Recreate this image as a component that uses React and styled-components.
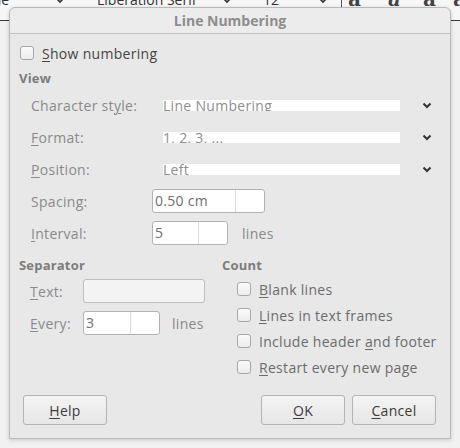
import React from "react";
import styled, { createGlobalStyle } from "styled-components";

const GlobalStyle = createGlobalStyle`
	html, body {
		margin: 0;
		padding: 0;
	}
	body {
		width: 460px;
		height: 448px;
		overflow: hidden;
		background: #f1f1f1;
		font-family: "Open Sans", "DejaVu Sans", sans-serif;
	}
`;

const Screen = styled.div`
	position: relative;
	width: 460px;
	height: 448px;
	overflow: hidden;
`;

const Toolbar = styled.div`
	display: flex;
	align-items: flex-start;
	height: 20px;
	background: #f7f7f7;
	border-bottom: 1px solid #3a3a3a;
	overflow: hidden;
`;

const ToolText = styled.span`
	flex: none;
	width: ${(p) => p.$w}px;
	margin-left: ${(p) => p.$ml || 0}px;
	margin-top: -9px;
	font-size: 14px;
	line-height: 18px;
	color: #333;
	white-space: nowrap;
`;

const ToolChevron = styled.svg`
	flex: none;
	margin-top: -3px;
`;

const ToolSep = styled.span`
	flex: none;
	width: 1px;
	height: 20px;
	background: #555;
	margin-left: 13px;
`;

const Glyph = styled.span`
	flex: none;
	width: ${(p) => p.$w}px;
	margin-left: ${(p) => p.$ml || 0}px;
	margin-top: -12px;
	font-family: "DejaVu Serif", serif;
	font-weight: bold;
	font-style: ${(p) => (p.$italic ? "italic" : "normal")};
	font-size: 20px;
	line-height: 22px;
	color: #444;
`;

const Dialog = styled.div`
	position: absolute;
	left: 9px;
	top: 7px;
	width: 442px;
	height: 432px;
	box-sizing: border-box;
	display: flex;
	flex-direction: column;
	background: #e8e8e8;
	border: 1px solid #b9b9b9;
	border-radius: 6px 6px 0 0;
	box-shadow: 0 1px 4px rgba(0, 0, 0, 0.18);
`;

const TitleBar = styled.div`
	height: 25px;
	display: flex;
	align-items: center;
	justify-content: center;
	background: #ececec;
	border-bottom: 1px solid #c2c2c2;
	border-radius: 6px 6px 0 0;
	font-size: 14px;
	font-weight: bold;
	color: #8d8d8d;
`;

const Body = styled.div`
	flex: 1;
	display: flex;
	flex-direction: column;
	padding: 8px 5px 13px 9px;
	font-size: 14px;
	letter-spacing: 0.3px;
`;

const U = styled.span`
	text-decoration: underline;
	text-underline-offset: 2px;
	text-decoration-thickness: 1px;
`;

const CheckRow = styled.div`
	display: flex;
	align-items: center;
	gap: 8px;
	height: ${(p) => p.$h}px;
	padding-left: ${(p) => p.$indent}px;
	color: ${(p) => p.$color};
	white-space: nowrap;
`;

const CheckBox = styled.span`
	flex: none;
	width: 14px;
	height: 14px;
	box-sizing: border-box;
	border: 1px solid #a8a8a8;
	border-radius: 3px;
	background: linear-gradient(#fbfbfb, #ececec);
`;

const SectionHeader = styled.div`
	height: 16px;
	line-height: 16px;
	margin-top: ${(p) => p.$mt}px;
	font-size: 13px;
	font-weight: bold;
	letter-spacing: 0.2px;
	color: #7c7c7c;
`;

const ViewGrid = styled.div`
	display: grid;
	grid-template-columns: 121px 1fr;
	grid-auto-rows: 32px;
	align-items: center;
	padding-left: 12px;
	margin-top: 3px;
`;

const FieldLabel = styled.span`
	color: #8a8a8a;
	white-space: nowrap;
`;

const Combo = styled.div`
	display: flex;
	align-items: center;
	padding-left: 11px;
`;

const ComboValue = styled.div`
	width: 237px;
	height: 11px;
	line-height: 12px;
	overflow: hidden;
	background: #fff;
	font-size: 14px;
	color: #8f8f8f;
	white-space: nowrap;
`;

const Chevron = styled.svg`
	margin-left: 22px;
	flex: none;
`;

const InlineRow = styled.div`
	display: flex;
	align-items: center;
	gap: ${(p) => p.$gap}px;
`;

const SpinBox = styled.div`
	display: flex;
	width: ${(p) => p.$w}px;
	height: 24px;
	box-sizing: border-box;
	border: 1px solid #b3b3b3;
	border-radius: 3px;
	background: #fff;
	overflow: hidden;
`;

const SpinText = styled.div`
	flex: 1;
	padding-left: 2px;
	line-height: 22px;
	color: #6e6e6e;
	border-right: 1px solid #dcdcdc;
`;

const SpinButtons = styled.div`
	width: 28px;
	flex: none;
`;

const Unit = styled.span`
	color: #8a8a8a;
`;

const LowerGrid = styled.div`
	display: grid;
	grid-template-columns: 203px 1fr;
	margin-top: 8px;
`;

const SepGrid = styled.div`
	display: grid;
	grid-template-columns: 53px auto;
	grid-auto-rows: 32px;
	align-items: center;
	padding-left: 11px;
	margin-top: 2px;
`;

const TextField = styled.div`
	width: 122px;
	height: 24px;
	box-sizing: border-box;
	border: 1px solid #bdbdbd;
	border-radius: 3px;
	background: #f3f3f3;
`;

const CountList = styled.div`
	margin-top: 3px;
`;

const ButtonRow = styled.div`
	margin-top: auto;
	display: flex;
	gap: 7px;
	padding-left: 4px;
`;

const Button = styled.div`
	width: 84px;
	height: 30px;
	box-sizing: border-box;
	display: flex;
	align-items: center;
	justify-content: center;
	border: 1px solid #b4b4b4;
	border-radius: 3px;
	background: linear-gradient(#f4f4f4, #e6e6e6);
	color: #3c3c3c;
	margin-left: ${(p) => p.$ml || 0}px;
`;

const ChevronIcon = () => (
	<Chevron width="10" height="7" viewBox="0 0 10 7">
		<polyline points="1.5,1.5 5,5 8.5,1.5" fill="none" stroke="#333" strokeWidth="2" />
	</Chevron>
);

const ToolChevronIcon = () => (
	<ToolChevron width="10" height="7" viewBox="0 0 10 7">
		<polyline points="1,1 5,5 9,1" fill="none" stroke="#333" strokeWidth="1.6" />
	</ToolChevron>
);

const combos = [
	{ label: <>Character st<U>y</U>le:</>, value: "Line Numbering" },
	{ label: <><U>F</U>ormat:</>, value: "1, 2, 3, ..." },
	{ label: <><U>P</U>osition:</>, value: "Left" },
];

const counts = [
	<><U>B</U>lank lines</>,
	<><U>L</U>ines in text frames</>,
	<>Include header <U>a</U>nd footer</>,
	<><U>R</U>estart every new page</>,
];

export default function App() {
	return (
		<Screen>
			<GlobalStyle />
			<Toolbar>
				<ToolText $w={77} $ml={-22}>Style</ToolText>
				<ToolChevronIcon />
				<ToolText $w={125} $ml={32}>Liberation Serif</ToolText>
				<ToolChevronIcon />
				<ToolText $w={55} $ml={31}>12</ToolText>
				<ToolChevronIcon />
				<ToolSep />
				<Glyph $w={40} $ml={6}>a</Glyph>
				<Glyph $w={35} $italic>a</Glyph>
				<Glyph $w={30}>a</Glyph>
				<Glyph $w={20}>a</Glyph>
			</Toolbar>

			<Dialog>
				<TitleBar>Line Numbering</TitleBar>
				<Body>
					<CheckRow $h={22} $indent={1} $color="#454545">
						<CheckBox />
						<span><U>S</U>how numbering</span>
					</CheckRow>

					<SectionHeader $mt={6}>View</SectionHeader>
					<ViewGrid>
						{combos.map((c, i) => (
							<React.Fragment key={i}>
								<FieldLabel>{c.label}</FieldLabel>
								<Combo>
									<ComboValue>{c.value}</ComboValue>
									<ChevronIcon />
								</Combo>
							</React.Fragment>
						))}
						<FieldLabel>Spacin<U>g</U>:</FieldLabel>
						<SpinBox $w={113}>
							<SpinText>0.50 cm</SpinText>
							<SpinButtons />
						</SpinBox>
						<FieldLabel><U>I</U>nterval:</FieldLabel>
						<InlineRow $gap={14}>
							<SpinBox $w={76}>
								<SpinText>5</SpinText>
								<SpinButtons />
							</SpinBox>
							<Unit>lines</Unit>
						</InlineRow>
					</ViewGrid>

					<LowerGrid>
						<div>
							<SectionHeader $mt={0}>Separator</SectionHeader>
							<SepGrid>
								<FieldLabel><U>T</U>ext:</FieldLabel>
								<TextField />
								<FieldLabel><U>E</U>very:</FieldLabel>
								<InlineRow $gap={12}>
									<SpinBox $w={77}>
										<SpinText>3</SpinText>
										<SpinButtons />
									</SpinBox>
									<Unit>lines</Unit>
								</InlineRow>
							</SepGrid>
						</div>
						<div>
							<SectionHeader $mt={0}>Count</SectionHeader>
							<CountList>
								{counts.map((c, i) => (
									<CheckRow key={i} $h={26} $indent={15} $color="#6c6c6c">
										<CheckBox />
										<span>{c}</span>
									</CheckRow>
								))}
							</CountList>
						</div>
					</LowerGrid>

					<ButtonRow>
						<Button><span><U>H</U>elp</span></Button>
						<Button $ml={147}><span><U>O</U>K</span></Button>
						<Button><span><U>C</U>ancel</span></Button>
					</ButtonRow>
				</Body>
			</Dialog>
		</Screen>
	);
}
